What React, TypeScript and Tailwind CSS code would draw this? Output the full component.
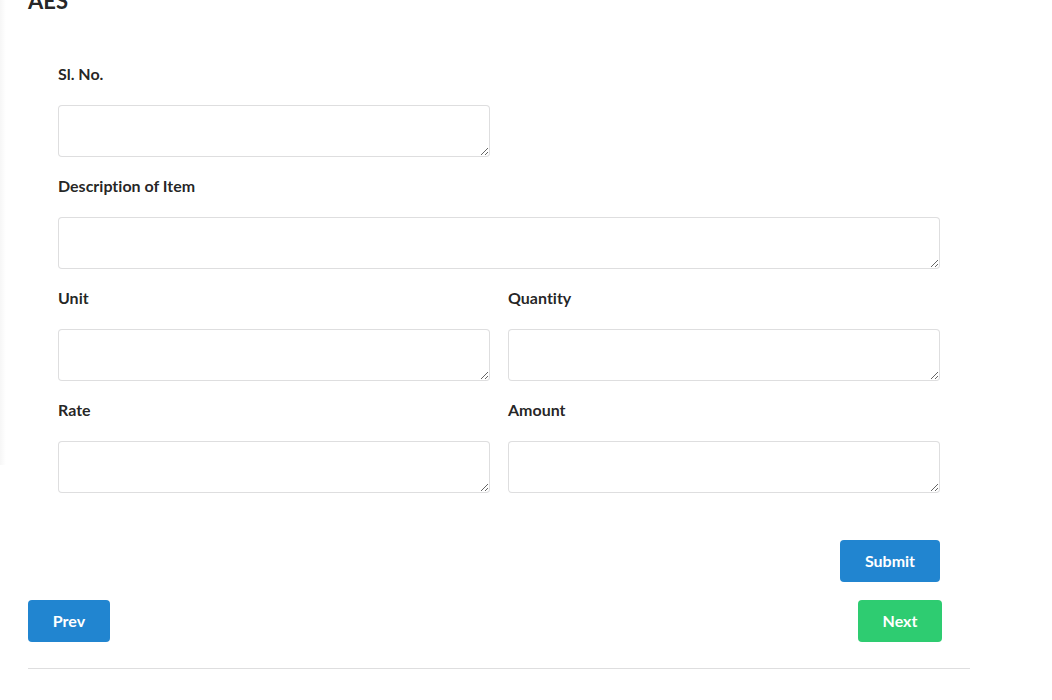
import React from "react";

const Field = ({ label, className = "" }: { label: string; className?: string }) => (
  <div className={"flex flex-col " + className}>
    <label className="block h-[20px] leading-[20px] text-[16px] font-bold text-[rgba(0,0,0,0.87)] [font-variant-ligatures:none]">
      {label}
    </label>
    <textarea className="mt-[21px] h-[52px] w-full rounded-[4px] border border-[rgba(34,36,38,0.15)] bg-white px-[14px] py-[10px] outline-none" />
  </div>
);

export default function App() {
  return (
    <div
      className="relative h-[700px] w-[1052px] overflow-hidden bg-white [font-variant-ligatures:none]"
      style={{ fontFamily: "Lato, 'Open Sans', Arial, sans-serif" }}
    >
      <div className="pointer-events-none absolute left-0 top-0 h-[465px] w-[6px] bg-gradient-to-r from-[rgba(0,0,0,0.035)] to-transparent" />
      <div className="pl-[28px] pr-[82px]">
        <h3 className="mt-[-10px] text-[22px] font-bold leading-[22px] text-[rgba(0,0,0,0.87)]">AES</h3>
        <div className="mt-[52px] flex flex-col gap-[19px] pl-[30px] pr-[30px]">
          <div className="grid grid-cols-2 gap-x-[18px]">
            <Field label="Sl. No." />
          </div>
          <Field label="Description of Item" />
          <div className="grid grid-cols-2 gap-x-[18px]">
            <Field label="Unit" />
            <Field label="Quantity" />
          </div>
          <div className="grid grid-cols-2 gap-x-[18px]">
            <Field label="Rate" />
            <Field label="Amount" />
          </div>
        </div>
        <div className="mt-[47px] flex justify-end pr-[30px]">
          <button className="h-[42px] w-[100px] rounded-[4px] bg-[#2185d0] text-[16px] font-bold text-white">
            Submit
          </button>
        </div>
        <div className="mt-[18px] flex items-center justify-between pr-[28px]">
          <button className="h-[42px] w-[82px] rounded-[4px] bg-[#2185d0] text-[16px] font-bold text-white">
            Prev
          </button>
          <button className="h-[42px] w-[84px] rounded-[4px] bg-[#2ecc71] text-[16px] font-bold text-white">
            Next
          </button>
        </div>
        <div className="mt-[26px] h-px bg-[rgba(34,36,38,0.15)]" />
      </div>
    </div>
  );
}
